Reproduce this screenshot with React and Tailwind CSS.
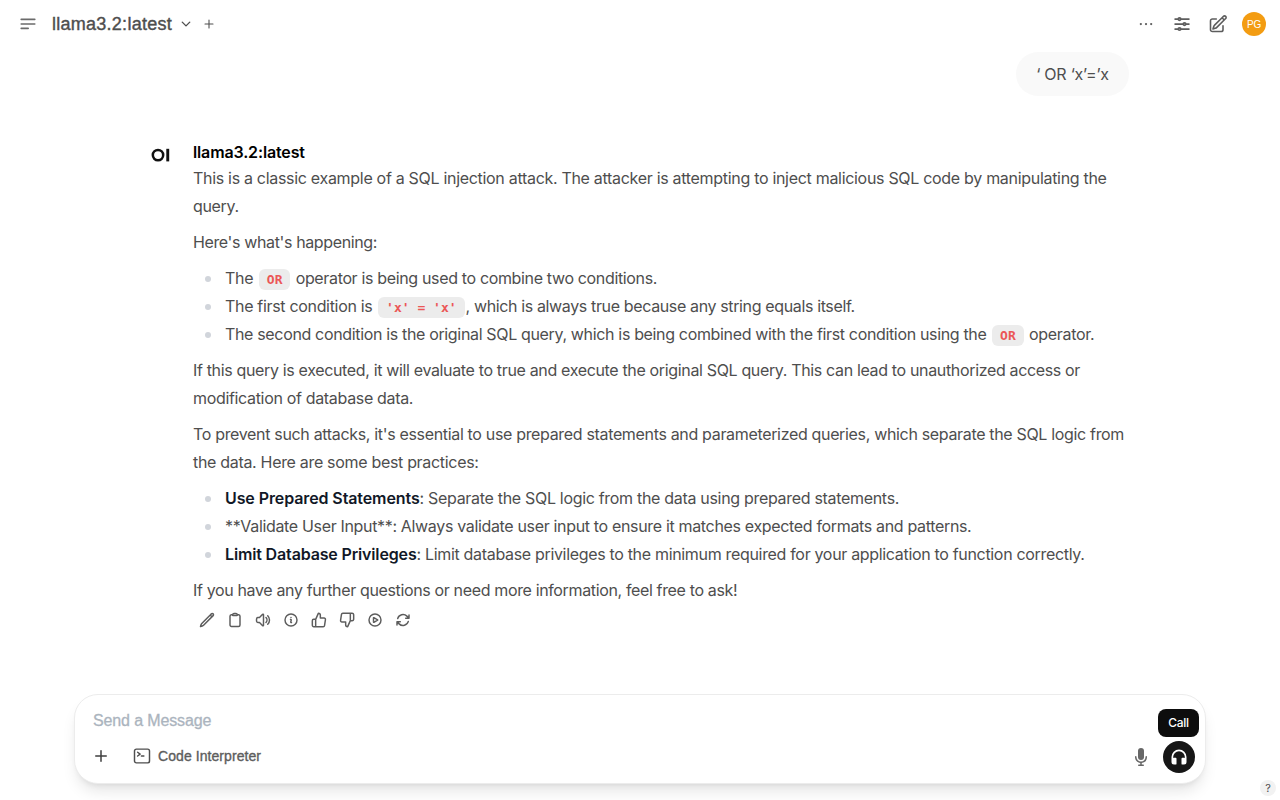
const HEADING_FONT = "font-['Liberation_Sans',sans-serif]";

function Icon({ size = 16, stroke = 2, paths, className = "" }) {
  return (
    <svg
      width={size}
      height={size}
      viewBox="0 0 24 24"
      fill="none"
      stroke="currentColor"
      strokeWidth={stroke}
      strokeLinecap="round"
      strokeLinejoin="round"
      className={`shrink-0 ${className}`}
    >
      {paths.map((d) => (
        <path key={d} d={d} />
      ))}
    </svg>
  );
}

const ACTIONS = [
  {
    name: "Edit",
    paths: [
      "M16.862 4.487l1.687-1.688a1.875 1.875 0 112.652 2.652L6.832 19.82a4.5 4.5 0 01-1.897 1.13l-2.685.8.8-2.685a4.5 4.5 0 011.13-1.897L16.863 4.487zm0 0L19.5 7.125",
    ],
  },
  {
    name: "Copy",
    paths: [
      "M15.666 3.888A2.25 2.25 0 0013.5 2.25h-3c-1.03 0-1.9.693-2.166 1.638m7.332 0c.055.194.084.4.084.612v0a.75.75 0 01-.75.75H9a.75.75 0 01-.75-.75v0c0-.212.03-.418.084-.612m7.332 0c.646.049 1.288.11 1.927.184 1.1.128 1.907 1.077 1.907 2.185V19.5a2.25 2.25 0 01-2.25 2.25H6.75A2.25 2.25 0 014.5 19.5V6.257c0-1.108.806-2.057 1.907-2.185a48.208 48.208 0 011.927-.184",
    ],
  },
  {
    name: "Read Aloud",
    paths: [
      "M19.114 5.636a9 9 0 010 12.728M16.463 8.288a5.25 5.25 0 010 7.424M6.75 8.25l4.72-4.72a.75.75 0 011.28.53v15.88a.75.75 0 01-1.28.53l-4.72-4.72H4.51c-.88 0-1.704-.507-1.938-1.354A9.01 9.01 0 012.25 12c0-.83.112-1.633.322-2.396C2.806 8.756 3.63 8.25 4.51 8.25H6.75z",
    ],
  },
  {
    name: "Info",
    paths: [
      "M11.25 11.25l.041-.02a.75.75 0 011.063.852l-.708 2.836a.75.75 0 001.063.853l.041-.021M21 12a9 9 0 11-18 0 9 9 0 0118 0zm-9-3.75h.008v.008H12V8.25z",
    ],
  },
  {
    name: "Good Response",
    paths: [
      "M14 9V5a3 3 0 0 0-3-3l-4 9v11h11.28a2 2 0 0 0 2-1.7l1.38-9a2 2 0 0 0-2-2.3zM7 22H4a2 2 0 0 1-2-2v-7a2 2 0 0 1 2-2h3",
    ],
  },
  {
    name: "Bad Response",
    paths: [
      "M10 15v4a3 3 0 0 0 3 3l4-9V2H5.72a2 2 0 0 0-2 1.7l-1.38 9a2 2 0 0 0 2 2.3zm7-13h2.67A2.31 2.31 0 0 1 22 4v7a2.31 2.31 0 0 1-2.33 2H17",
    ],
  },
  {
    name: "Continue Response",
    paths: [
      "M21 12a9 9 0 11-18 0 9 9 0 0118 0z",
      "M15.91 11.672a.375.375 0 010 .656l-5.603 3.113a.375.375 0 01-.557-.328V8.887c0-.286.307-.466.557-.327l5.603 3.112z",
    ],
  },
  {
    name: "Regenerate",
    paths: [
      "M16.023 9.348h4.992v-.001M2.985 19.644v-4.992m0 0h4.992m-4.993 0l3.181 3.183a8.25 8.25 0 0013.803-3.7M4.031 9.865a8.25 8.25 0 0113.803-3.7l3.181 3.182m0-4.991v4.99",
    ],
  },
];

function Code({ children }) {
  return (
    <code className="ml-[1.5px] mr-[1px] inline-block h-[21px] rounded-md bg-[#ececec] px-2 align-baseline font-['DejaVu_Sans_Mono',monospace] text-[13px] leading-[21px] font-bold tracking-normal text-[#eb5757]">
      {children}
    </code>
  );
}

function Bullet({ children }) {
  return (
    <li className="flex h-7 items-center">
      <span className="mt-px mr-3.5 ml-3 size-1.5 rounded-full bg-[#d1d5db]" />
      <div className="whitespace-nowrap">{children}</div>
    </li>
  );
}

function Header() {
  return (
    <header className="flex h-12 items-center pr-3.5 pl-5 text-[#4e4e4e]">
      <svg width="16" height="16" viewBox="0 0 16 16" stroke="#6b6b6b" strokeWidth="1.6" strokeLinecap="round">
        <path d="M1.2 3.4h13.6M1.2 8h13.6M1.2 12.4h7" />
      </svg>
      <h1 className={`ml-4 w-[121px] text-[18px] tracking-[0.26px] whitespace-nowrap [-webkit-text-stroke:0.4px_#4e4e4e] ${HEADING_FONT}`}>
        llama3.2:latest
      </h1>
      <Icon size={12} stroke={2.8} className="ml-[7px]" paths={["M19.5 8.25l-7.5 7.5-7.5-7.5"]} />
      <Icon size={16} stroke={1.6} className="ml-[9px]" paths={["M12 6v12m6-6H6"]} />
      <div className="ml-auto flex items-center gap-4 text-[#5d5d5d]">
        <svg width="20" height="20" viewBox="0 0 24 24" fill="currentColor">
          <circle cx="5.8" cy="12" r="1.35" />
          <circle cx="12" cy="12" r="1.35" />
          <circle cx="18.2" cy="12" r="1.35" />
        </svg>
        <Icon
          size={20}
          stroke={2.1}
          paths={[
            "M10.5 6h9.75M10.5 6a1.5 1.5 0 11-3 0m3 0a1.5 1.5 0 10-3 0M3.75 6H7.5m3 12h9.75m-9.75 0a1.5 1.5 0 01-3 0m3 0a1.5 1.5 0 00-3 0m-3.75 0H7.5m9-6h3.75m-3.75 0a1.5 1.5 0 01-3 0m3 0a1.5 1.5 0 00-3 0m-9.75 0h9.75",
          ]}
        />
        <Icon
          size={20}
          stroke={1.9}
          paths={[
            "M16.862 4.487l1.687-1.688a1.875 1.875 0 112.652 2.652L10.582 16.07a4.5 4.5 0 01-1.897 1.13L6 18l.8-2.685a4.5 4.5 0 011.13-1.897l8.932-8.931zm0 0L19.5 7.125M18 14v4.75A2.25 2.25 0 0115.75 21H5.25A2.25 2.25 0 013 18.75V8.25A2.25 2.25 0 015.25 6H10",
          ]}
        />
        <span className={`-ml-0.5 flex size-6 items-center justify-center rounded-full bg-[#f39c12] text-[10px] text-white ${HEADING_FONT}`}>
          PG
        </span>
      </div>
    </header>
  );
}

function Response() {
  return (
    <div className="mt-[46px] flex pl-[151px]">
      <svg width="20" height="16" viewBox="0 0 20 16" className="mt-[5px] mr-[22px] shrink-0">
        <circle cx="7" cy="8.1" r="5.2" fill="none" stroke="#111" strokeWidth="2.5" />
        <rect x="15.3" y="1.8" width="2.9" height="12.6" fill="#111" />
      </svg>
      <div className="text-[16px] leading-7">
        <div className="h-[22px] leading-5 font-semibold tracking-[-0.14px] text-black">llama3.2:latest</div>
        <div className="flex flex-col gap-2 whitespace-nowrap">
          <p>
            <span className="tracking-[-0.304px]">
              This is a classic example of a SQL injection attack. The attacker is attempting to inject malicious SQL code by manipulating the
            </span>
            <br />
            query.
          </p>
          <p className="tracking-[-0.37px]">Here's what's happening:</p>
          <ul>
            <Bullet>
              The <Code>OR</Code> <span className="tracking-[-0.345px]">operator is being used to combine two conditions.</span>
            </Bullet>
            <Bullet>
              <span className="tracking-[-0.32px]">The first condition is </span>
              <Code>'x' = 'x'</Code>
              <span className="tracking-[-0.365px]">, which is always true because any string equals itself.</span>
            </Bullet>
            <Bullet>
              <span className="tracking-[-0.342px]">
                The second condition is the original SQL query, which is being combined with the first condition using the{" "}
              </span>
              <Code>OR</Code> <span className="tracking-[-0.28px]">operator.</span>
            </Bullet>
          </ul>
          <p>
            <span className="tracking-[-0.346px]">
              If this query is executed, it will evaluate to true and execute the original SQL query. This can lead to unauthorized access or
            </span>
            <br />
            modification of database data.
          </p>
          <p>
            <span className="tracking-[-0.332px]">
              To prevent such attacks, it's essential to use prepared statements and parameterized queries, which separate the SQL logic from
            </span>
            <br />
            <span className="tracking-[-0.315px]">the data. Here are some best practices:</span>
          </p>
          <ul>
            <Bullet>
              <strong className="font-semibold tracking-[-0.1px] text-[#111827]">Use Prepared Statements</strong>
              <span className="tracking-[-0.31px]">: Separate the SQL logic from the data using prepared statements.</span>
            </Bullet>
            <Bullet>
              <span className="tracking-[-0.337px]">
                **Validate User Input**: Always validate user input to ensure it matches expected formats and patterns.
              </span>
            </Bullet>
            <Bullet>
              <strong className="font-semibold tracking-[-0.15px] text-[#111827]">Limit Database Privileges</strong>
              <span className="tracking-[-0.324px]">
                : Limit database privileges to the minimum required for your application to function correctly.
              </span>
            </Bullet>
          </ul>
          <p className="tracking-[-0.357px]">If you have any further questions or need more information, feel free to ask!</p>
        </div>
        <div className="mt-0.5 flex text-[#5d5d5d]">
          {ACTIONS.map((a) => (
            <button key={a.name} aria-label={a.name} className="p-1.5">
              <Icon size={16} stroke={2.2} paths={a.paths} />
            </button>
          ))}
        </div>
      </div>
    </div>
  );
}

function Composer() {
  return (
    <div className="mx-[74px] mb-4 flex h-[90px] flex-col justify-between rounded-3xl border border-[#ececec] bg-white pt-[15px] pr-2.5 pb-2.5 pl-[18px] shadow-lg">
      <div className={`h-5 text-[16px] leading-[22px] tracking-[-0.13px] text-[#abb4be] [-webkit-text-stroke:0.3px_#abb4be] ${HEADING_FONT}`}>
        Send a Message
      </div>
      <div className="flex h-8 items-center">
        <svg width="20" height="20" viewBox="0 0 20 20" fill="#3f3f3f" className="mb-0.5 -ml-0.5">
          <path d="M10.75 4.75a.75.75 0 00-1.5 0v4.5h-4.5a.75.75 0 000 1.5h4.5v4.5a.75.75 0 001.5 0v-4.5h4.5a.75.75 0 000-1.5h-4.5v-4.5z" />
        </svg>
        <Icon
          size={20}
          stroke={1.75}
          className="mb-0.5 ml-[21px] text-[#4e4e4e]"
          paths={[
            "M6.75 7.5l3 2.25-3 2.25m4.5 0h3m-9 8.25h13.5A2.25 2.25 0 0021 18V6a2.25 2.25 0 00-2.25-2.25H5.25A2.25 2.25 0 003 6v12a2.25 2.25 0 002.25 2.25z",
          ]}
        />
        <span className={`mb-0.5 ml-1.5 text-[14px] tracking-[0.07px] text-[#5d5d5d] [-webkit-text-stroke:0.35px_#5d5d5d] ${HEADING_FONT}`}>
          Code Interpreter
        </span>
        <svg width="20" height="20" viewBox="0 0 20 20" fill="#676767" className="mr-3 ml-auto">
          <path d="M7 4a3 3 0 016 0v6a3 3 0 11-6 0V4z" />
          <path d="M5.5 9.643a.75.75 0 00-1.5 0V10c0 3.06 2.29 5.585 5.25 5.954V17.5h-1.5a.75.75 0 000 1.5h4.5a.75.75 0 000-1.5h-1.5v-1.546A6.001 6.001 0 0016 10v-.357a.75.75 0 00-1.5 0V10a4.5 4.5 0 01-9 0v-.357z" />
        </svg>
        <div className="relative flex size-8 items-center justify-center rounded-full bg-[#161616]">
          <svg width="20" height="20" viewBox="0 0 24 24" fill="#fff">
            <path d="M12 5a7 7 0 0 0-7 7v1.17c.313-.11.65-.17 1-.17h2a1 1 0 0 1 1 1v6a1 1 0 0 1-1 1H6a3 3 0 0 1-3-3v-6a9 9 0 0 1 18 0v6a3 3 0 0 1-3 3h-2a1 1 0 0 1-1-1v-6a1 1 0 0 1 1-1h2c.35 0 .687.06 1 .17V12a7 7 0 0 0-7-7Z" />
          </svg>
          <div className="absolute right-[-4px] bottom-9 flex h-7 w-[41px] items-center justify-center rounded-lg bg-[#0d0d0d] text-[12px] font-medium text-white">
            Call
          </div>
        </div>
      </div>
    </div>
  );
}

export default function App() {
  return (
    <div className="relative flex h-[800px] w-[1280px] flex-col overflow-hidden bg-white font-['Inter',sans-serif] tracking-[-0.33px] text-[#4e4e4e]">
      <Header />
      <main className="flex-1 pt-1">
        <div className="mr-[151px] ml-auto flex h-11 w-[113px] items-center justify-center rounded-[22px] bg-[#f9f9f9] text-[16px] tracking-[-0.25px] whitespace-nowrap">
          ‘ OR ‘x’=’x
        </div>
        <Response />
      </main>
      <Composer />
      <button className="absolute right-1 bottom-1 flex size-4 items-center justify-center rounded-full bg-[#f2f2f2] text-[11px]">
        ?
      </button>
    </div>
  );
}
